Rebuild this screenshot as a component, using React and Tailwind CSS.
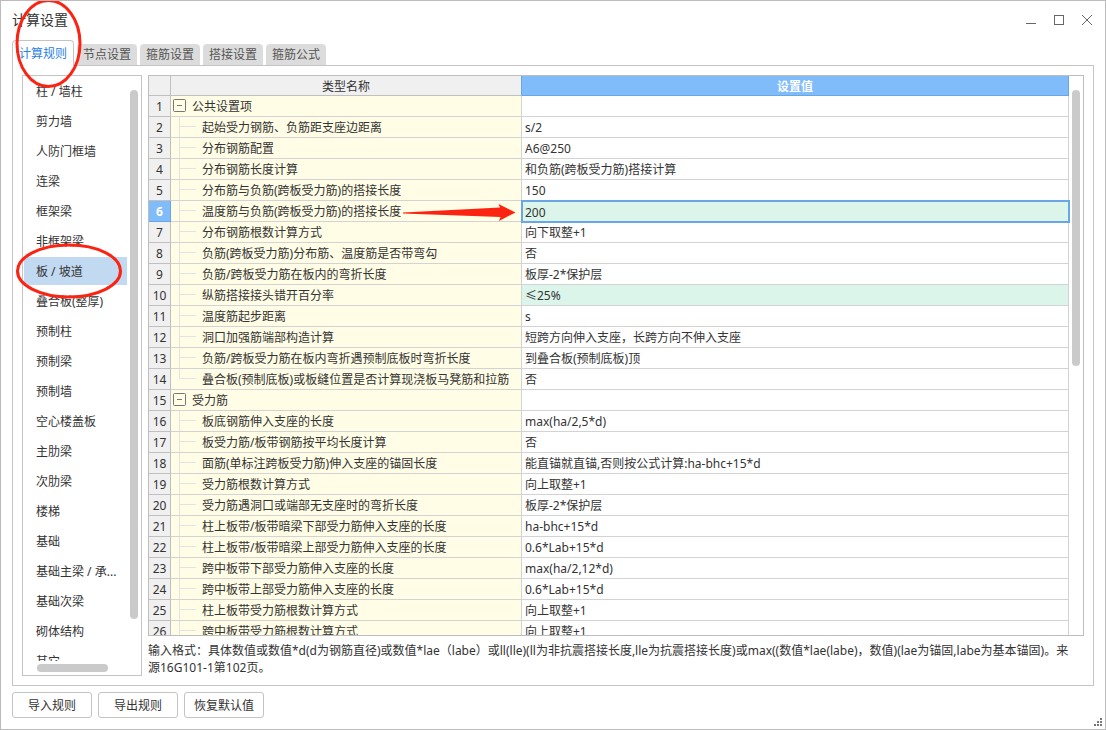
import { useState } from 'react';
import clsx from 'clsx';

const tabs = ['计算规则', '节点设置', '箍筋设置', '搭接设置', '箍筋公式'];

const components = [
  '柱 / 墙柱',
  '剪力墙',
  '人防门框墙',
  '连梁',
  '框架梁',
  '非框架梁',
  '板 / 坡道',
  '叠合板(整厚)',
  '预制柱',
  '预制梁',
  '预制墙',
  '空心楼盖板',
  '主肋梁',
  '次肋梁',
  '楼梯',
  '基础',
  '基础主梁 / 承...',
  '基础次梁',
  '砌体结构',
  '其它',
];

const rows = [
  { name: '公共设置项', group: true },
  { name: '起始受力钢筋、负筋距支座边距离', value: 's/2' },
  { name: '分布钢筋配置', value: 'A6@250' },
  { name: '分布钢筋长度计算', value: '和负筋(跨板受力筋)搭接计算' },
  { name: '分布筋与负筋(跨板受力筋)的搭接长度', value: '150' },
  { name: '温度筋与负筋(跨板受力筋)的搭接长度', value: '200', changed: true, selected: true },
  { name: '分布钢筋根数计算方式', value: '向下取整+1' },
  { name: '负筋(跨板受力筋)分布筋、温度筋是否带弯勾', value: '否' },
  { name: '负筋/跨板受力筋在板内的弯折长度', value: '板厚-2*保护层' },
  { name: '纵筋搭接接头错开百分率', value: '≤25%', changed: true },
  { name: '温度筋起步距离', value: 's' },
  { name: '洞口加强筋端部构造计算', value: '短跨方向伸入支座，长跨方向不伸入支座' },
  { name: '负筋/跨板受力筋在板内弯折遇预制底板时弯折长度', value: '到叠合板(预制底板)顶' },
  { name: '叠合板(预制底板)或板缝位置是否计算现浇板马凳筋和拉筋', value: '否', last: true },
  { name: '受力筋', group: true },
  { name: '板底钢筋伸入支座的长度', value: 'max(ha/2,5*d)' },
  { name: '板受力筋/板带钢筋按平均长度计算', value: '否' },
  { name: '面筋(单标注跨板受力筋)伸入支座的锚固长度', value: '能直锚就直锚,否则按公式计算:ha-bhc+15*d' },
  { name: '受力筋根数计算方式', value: '向上取整+1' },
  { name: '受力筋遇洞口或端部无支座时的弯折长度', value: '板厚-2*保护层' },
  { name: '柱上板带/板带暗梁下部受力筋伸入支座的长度', value: 'ha-bhc+15*d' },
  { name: '柱上板带/板带暗梁上部受力筋伸入支座的长度', value: '0.6*Lab+15*d' },
  { name: '跨中板带下部受力筋伸入支座的长度', value: 'max(ha/2,12*d)' },
  { name: '跨中板带上部受力筋伸入支座的长度', value: '0.6*Lab+15*d' },
  { name: '柱上板带受力筋根数计算方式', value: '向上取整+1' },
  { name: '跨中板带受力筋根数计算方式', value: '向上取整+1' },
];

function TitleBar() {
  return (
    <header className="flex h-[39px] shrink-0 items-center justify-between pb-0.5">
      <h1 className="text-sm leading-5 text-[#333]">计算设置</h1>
      <div className="flex gap-3 text-[#666]">
        <button type="button" aria-label="最小化" className="size-4">
          <svg width="16" height="16" viewBox="0 0 16 16" stroke="currentColor" fill="none" shapeRendering="crispEdges">
            <path d="M4 11.500h10" />
          </svg>
        </button>
        <button type="button" aria-label="最大化" className="size-4">
          <svg width="16" height="16" viewBox="0 0 16 16" stroke="currentColor" fill="none" shapeRendering="crispEdges">
            <path d="M4.500 3.500h9v9h-9z" />
          </svg>
        </button>
        <button type="button" aria-label="关闭" className="size-4">
          <svg width="16" height="16" viewBox="0 0 16 16" stroke="currentColor" fill="none">
            <path d="M4 3l10 10M14 3L4 13" />
          </svg>
        </button>
      </div>
    </header>
  );
}

function Sidebar({ active, onSelect }) {
  return (
    <aside className="flex w-[120px] shrink-0 flex-col border border-[#c4c4c4]">
      <div className="flex min-h-0 flex-1">
        <ul className="flex min-w-0 flex-1 flex-col gap-0.5 overflow-hidden pt-px pl-px">
          {components.map((item) => (
            <li key={item} className="h-7 shrink-0">
              <button
                type="button"
                onClick={() => onSelect(item)}
                className={clsx(
                  'h-7 w-full pt-0.5 pl-3 text-left whitespace-nowrap',
                  item === active && 'bg-[#c2d9f2]'
                )}
              >
                {item}
              </button>
            </li>
          ))}
        </ul>
        <div className="w-3.5 shrink-0 pt-3.5 pl-[3px]">
          <div className="h-[529px] max-h-full w-2 rounded-full bg-[#cacaca]" />
        </div>
      </div>
      <div className="h-3.5 shrink-0 pt-[3px] pl-3.5">
        <div className="h-2 w-[71px] rounded-full bg-[#cacaca]" />
      </div>
    </aside>
  );
}

function NameCell({ row }) {
  if (row.group) {
    return (
      <div className="flex h-5 items-start pl-0.5">
        <button type="button" aria-label="折叠" className="mt-[3px] mr-1.5 size-[13px] shrink-0 text-[#777]">
          <svg width="13" height="13" viewBox="0 0 13 13" stroke="currentColor" fill="none">
            <rect x="0.5" y="0.5" width="12" height="12" rx="1" />
            <path d="M4 6.5h5" />
          </svg>
        </button>
        {row.name}
      </div>
    );
  }

  return (
    <div className="flex h-5 pl-2">
      <span className={clsx('mr-1.5 w-[17px] shrink-0 border-[#e3e3e3]', row.last ? 'h-2.5' : 'h-5 border-l')}>
        <span className={clsx('block h-2.5 border-b border-[#e3e3e3]', row.last && 'border-l')} />
      </span>
      {row.name}
    </div>
  );
}

function SettingsTable() {
  return (
    <div className="flex min-h-0 flex-1 overflow-hidden border border-[#bdbdbd]">
      <div className="min-w-0 flex-1">
        <table className="w-full table-fixed border-separate border-spacing-0 leading-[22px] whitespace-nowrap">
          <colgroup>
            <col className="w-[22px]" />
            <col className="w-[351px]" />
            <col />
          </colgroup>
          <thead>
            <tr>
              <th aria-label="序号" className="h-5 border-r border-b border-[#c0c0c0] bg-[#f0f0f0]" />
              <th className="border-r border-b border-r-[#68a6e6] border-b-[#c0c0c0] bg-[#f0f0f0] p-0 font-normal">
                <div className="h-[19px]">类型名称</div>
              </th>
              <th className="border-r border-b border-[#68a6e6] bg-[#80bbfa] p-0 text-white">
                <div className="h-[19px]">设置值</div>
              </th>
            </tr>
          </thead>
          <tbody>
            {rows.map((row, i) => (
              <tr key={row.name}>
                <td
                  className={clsx(
                    'border-r border-b p-0 text-center',
                    row.selected
                      ? 'border-[#68a6e6] bg-[#80bbfa] font-bold text-white'
                      : 'border-[#c0c0c0] bg-[#f0f0f0]'
                  )}
                >
                  <div className="h-5">{i + 1}</div>
                </td>
                <td className="border-r border-b border-[#d3d3d3] bg-[#fffde5] p-0">
                  <NameCell row={row} />
                </td>
                <td
                  className={clsx(
                    'border-r border-b border-[#d3d3d3] py-0 pr-0 pl-[3px]',
                    row.changed && 'bg-[#dcf5ea]',
                    row.selected && 'outline-2 -outline-offset-1 outline-[#68a6e6]'
                  )}
                >
                  {row.selected ? (
                    <input
                      aria-label={row.name}
                      defaultValue={row.value}
                      className="block h-5 w-full pt-0.5 leading-[18px] outline-none"
                    />
                  ) : (
                    <div className="h-5">{row.value}</div>
                  )}
                </td>
              </tr>
            ))}
          </tbody>
        </table>
      </div>
      <div className="w-3.5 shrink-0 pt-3.5 pl-[3px]">
        <div className="h-[276px] w-2 rounded-full bg-[#cacaca]" />
      </div>
    </div>
  );
}

// Red pen marks drawn over the dialog
function Annotations() {
  return (
    <svg className="pointer-events-none absolute top-0 left-0" width="540" height="320" viewBox="0 0 540 320" fill="none">
      <ellipse cx="47.5" cy="42.5" rx="31.5" ry="43" stroke="#fb2412" strokeWidth="3" />
      <ellipse cx="68" cy="270" rx="51.5" ry="26" stroke="#fb2412" strokeWidth="3" />
      <path d="M402 211.500L499 206.500L497.500 203L514.500 211.500L498 220L499.500 216L402 212.500Z" fill="#fb2412" />
    </svg>
  );
}

export default function App() {
  const [tab, setTab] = useState('计算规则');
  const [component, setComponent] = useState('板 / 坡道');

  return (
    <div
      lang="zh-CN"
      className="relative flex h-screen flex-col overflow-hidden border border-[#bcbcbc] bg-white px-[11px] pb-[11px] font-['Noto_Sans','Noto_Sans_CJK_SC',sans-serif] text-xs leading-5 text-[#333]"
    >
      <TitleBar />

      <nav className="flex h-[25px] shrink-0 items-end gap-[3px]">
        {tabs.map((item) => (
          <button
            key={item}
            type="button"
            onClick={() => setTab(item)}
            className={clsx(
              'rounded-t',
              item === tab
                ? 'relative -mb-px h-[26px] w-[62px] border border-b-0 border-[#c4c4c4] bg-white text-[#2a82e4]'
                : 'h-[21px] w-[60px] bg-[#dcdcdc] text-[#555]'
            )}
          >
            {item}
          </button>
        ))}
      </nav>

      <main className="flex min-h-0 flex-1 gap-1.5 border border-[#c4c4c4] p-[9px]">
        <Sidebar active={component} onSelect={setComponent} />
        <section className="flex min-w-0 flex-1 flex-col">
          <SettingsTable />
          <p className="h-10 shrink-0 pt-1.5 pr-2 leading-[17px]">
            输入格式：具体数值或数值*d(d为钢筋直径)或数值*lae（labe）或ll(lle)(ll为非抗震搭接长度,lle为抗震搭接长度)或max((数值*lae(labe)，数值)(lae为锚固,labe为基本锚固)。来源16G101-1第102页。
          </p>
        </section>
      </main>

      <footer className="mt-1.5 flex shrink-0 gap-1.5">
        {['导入规则', '导出规则', '恢复默认值'].map((label) => (
          <button
            key={label}
            type="button"
            className="h-[26px] w-20 rounded-[3px] border border-[#c4c4c4] bg-white pt-0.5"
          >
            {label}
          </button>
        ))}
      </footer>

      <svg className="absolute right-[3px] bottom-[3px]" width="8" height="8" viewBox="0 0 8 8" fill="#777" shapeRendering="crispEdges">
        <path d="M6 0h2v2H6zM3 3h2v2H3zM6 3h2v2H6zM0 6h2v2H0zM3 6h2v2H3zM6 6h2v2H6z" />
      </svg>
      <Annotations />
    </div>
  );
}
